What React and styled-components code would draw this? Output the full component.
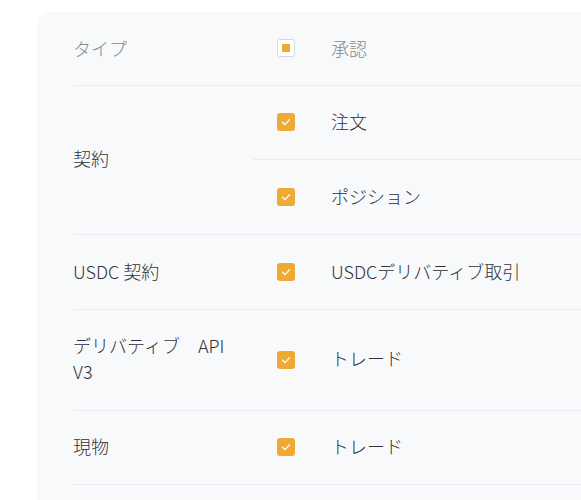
import React from "react";
import styled, { createGlobalStyle } from "styled-components";

const GlobalStyle = createGlobalStyle`
  html, body {
    margin: 0;
    padding: 0;
    background: #ffffff;
    overflow: hidden;
  }
  body {
    font-family: "Noto Sans CJK JP", "Noto Sans", sans-serif;
  }
`;

const rows = [
  { type: "契約", perms: ["注文", "ポジション"] },
  { type: "USDC 契約", perms: ["USDCデリバティブ取引"] },
  { type: "デリバティブ　API V3", perms: ["トレード"] },
  { type: "現物", perms: ["トレード"] },
];

const App = () => {
  return (
    <>
      <GlobalStyle />
      <Card>
        <Table>
          <thead>
            <tr>
              <HeadCell>タイプ</HeadCell>
              <CheckCell $head>
                <Checkbox $partial>
                  <PartialMark />
                </Checkbox>
              </CheckCell>
              <HeadCell>承認</HeadCell>
            </tr>
          </thead>
          <tbody>
            {rows.map((row) =>
              row.perms.map((perm, i) => (
                <tr key={row.type + perm}>
                  {i === 0 && (
                    <TypeCell rowSpan={row.perms.length}>{row.type}</TypeCell>
                  )}
                  <CheckCell>
                    <Checkbox>
                      <CheckIcon />
                    </Checkbox>
                  </CheckCell>
                  <LabelCell>{perm}</LabelCell>
                </tr>
              ))
            )}
          </tbody>
        </Table>
      </Card>
    </>
  );
};

const CheckIcon = () => (
  <svg width="12" height="12" viewBox="0 0 12 12" fill="none">
    <path
      d="M2.5 6.2 L5 8.6 L9.6 3.6"
      stroke="#fff"
      strokeWidth="1.3"
      strokeLinecap="round"
      strokeLinejoin="round"
    />
  </svg>
);

const Card = styled.div`
  margin: 12px 0 0 37px;
  width: 640px;
  height: 520px;
  background: #f8f9fb;
  border-radius: 12px;
  padding-left: 36px;
  box-sizing: border-box;
`;

const Table = styled.table`
  width: 100%;
  border-collapse: collapse;
  font-size: 18px;
  font-weight: 300;
  line-height: 26px;
  color: #2f3238;
  text-align: left;

  td,
  th {
    border-bottom: 1px solid #eaecef;
    vertical-align: middle;
  }
`;

const HeadCell = styled.th`
  font-weight: 300;
  color: #858990;
  padding: 22.5px 20px 24px 0;
  &:first-child {
    width: 160px;
  }
`;

const TypeCell = styled.td`
  width: 160px;
  padding: 22.5px 20px 25.25px 0;
`;

const CheckCell = styled.td`
  width: 18px;
  padding: 23px 36px 23px 24px;
  line-height: 0;
`;

const LabelCell = styled.td`
  padding: 22.5px 0 25.25px;
`;

const Checkbox = styled.span`
  display: inline-flex;
  align-items: center;
  justify-content: center;
  width: 18px;
  height: 18px;
  box-sizing: border-box;
  border-radius: 3px;
  background: ${(p) => (p.$partial ? "#ffffff" : "#eeaa35")};
  border: ${(p) => (p.$partial ? "1px solid #d5d8dd" : "none")};
`;

const PartialMark = styled.span`
  width: 8px;
  height: 8px;
  background: #eeaa35;
`;

export default App;
